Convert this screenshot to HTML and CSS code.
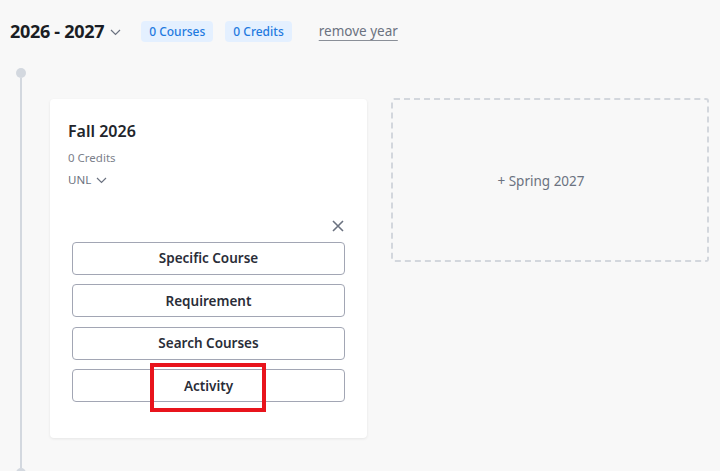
FILE: index.html
```html
<!DOCTYPE html>
<html>
<head>
<meta charset="utf-8">
<link rel="stylesheet" href="styles.css">
</head>
<body>
<div class="year-header">
  <h2 class="year-title">2026 - 2027</h2>
  <svg class="chev" width="11" height="7" viewBox="0 0 11 7"><path d="M1 1l4.5 4.5L10 1" fill="none" stroke="#6b7280" stroke-width="1.2"/></svg>
  <span class="badge badge-first">0 Courses</span>
  <span class="badge">0 Credits</span>
  <a class="remove">remove year</a>
</div>
<div class="year-body">
  <div class="rail">
    <span class="rail-dot"></span>
    <span class="rail-line"></span>
    <span class="rail-dot"></span>
  </div>
  <div class="semesters">
    <div class="card">
      <h3 class="sem-title">Fall 2026</h3>
      <div class="sem-credits">0 Credits</div>
      <div class="sem-school">UNL
        <svg class="chev-sm" width="11" height="7" viewBox="0 0 11 7"><path d="M1 1l4.5 4.5L10 1" fill="none" stroke="#6b7280" stroke-width="1.2"/></svg>
      </div>
      <div class="add-panel">
        <div class="close-row">
          <svg width="12" height="12" viewBox="0 0 12 12"><path d="M1 1l10 10M11 1L1 11" stroke="#6b7280" stroke-width="1.6"/></svg>
        </div>
        <button class="opt">Specific Course</button>
        <button class="opt">Requirement</button>
        <button class="opt">Search Courses</button>
        <div class="opt-wrap">
          <button class="opt">Activity</button>
          <span class="highlight"></span>
        </div>
      </div>
    </div>
    <div class="add-sem">+ Spring 2027</div>
  </div>
</div>
</body>
</html>
```
FILE: styles.css
```css
* { box-sizing: border-box; }
body {
  margin: 0;
  background: #f8f8f8;
  font-family: "Noto Sans", "Open Sans", sans-serif;
  color: #1f2937;
}
.year-header {
  display: flex;
  align-items: center;
  height: 30px;
  margin-top: 16px;
  padding-left: 10px;
}
.year-title {
  margin: 0;
  font-size: 18px;
  font-weight: 700;
  color: #1a1d24;
  letter-spacing: -0.3px;
}
.chev { margin-left: 6px; margin-top: 3px; }
.badge {
  display: inline-flex;
  align-items: center;
  height: 21px;
  padding: 0 8px;
  border-radius: 4px;
  background: #e4f0ff;
  color: #1f7ae0;
  font-size: 12px;
  font-weight: 500;
  margin-left: 12px;
}
.badge-first { margin-left: 20px; }
.remove {
  margin-left: 27px;
  font-size: 13.5px;
  color: #6b7280;
  text-decoration: underline;
  text-underline-offset: 4px;
  text-decoration-color: #8a8f98;
}
.year-body {
  display: flex;
  margin-top: 22px;
  padding-left: 16px;
}
.rail {
  width: 10px;
  display: flex;
  flex-direction: column;
  align-items: center;
  margin-bottom: -7px;
}
.rail-dot {
  width: 10px;
  height: 10px;
  border-radius: 50%;
  background: #d3d8df;
  flex: none;
}
.rail-line {
  width: 2px;
  flex: 1;
  background: #d3d8df;
}
.semesters {
  display: flex;
  align-items: flex-start;
  gap: 24px;
  margin-left: 24px;
  padding-top: 31px;
  padding-bottom: 33px;
}
.card {
  width: 317px;
  height: 339px;
  background: #fff;
  border-radius: 4px;
  box-shadow: 0 1px 3px rgba(0,0,0,0.08);
  padding: 21px 18px 0 18px;
}
.sem-title {
  margin: 0;
  font-size: 16px;
  font-weight: 600;
  line-height: 22px;
  color: #22252b;
}
.sem-credits {
  margin-top: 8px;
  font-size: 11.5px;
  color: #7b808a;
  line-height: 16px;
}
.sem-school {
  margin-top: 6px;
  font-size: 11.5px;
  color: #6b7280;
  line-height: 16px;
  display: flex;
  align-items: center;
}
.chev-sm { margin-left: 5px; }
.add-panel {
  margin-top: 32px;
  padding: 0 4px;
  display: flex;
  flex-direction: column;
  gap: 9.5px;
}
.close-row {
  display: flex;
  justify-content: flex-end;
  padding-right: 1px;
  height: 12px;
}
.opt-wrap { position: relative; }
.opt {
  width: 100%;
  height: 33px;
  background: #fff;
  border: 1px solid #a2a6b4;
  border-radius: 4px;
  font-family: inherit;
  font-size: 13.5px;
  font-weight: 600;
  color: #2a2d38;
  cursor: pointer;
}
.highlight {
  position: absolute;
  left: 78px;
  top: -6px;
  width: 116px;
  height: 49px;
  border: 4px solid #e8141c;
}
.add-sem {
  width: 318px;
  height: 164px;
  margin-top: -1px;
  padding-right: 18px;
  padding-top: 2px;
  border: 2px dashed #d3d7dd;
  border-radius: 3px;
  display: flex;
  align-items: center;
  justify-content: center;
  font-size: 13.5px;
  color: #6b7280;
}
```
